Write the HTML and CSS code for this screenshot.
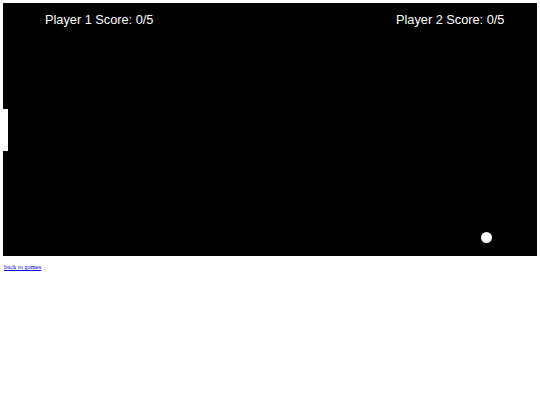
FILE: index.html
```html
<!DOCTYPE html>
<html>
<head>
<meta charset="utf-8">
<link rel="stylesheet" href="styles.css">
</head>
<body>
<div class="game">
  <div class="score score-left">Player 1 Score: 0/5</div>
  <div class="score score-right">Player 2 Score: 0/5</div>
  <div class="paddle paddle-left"></div>
  <div class="paddle paddle-right"></div>
  <div class="ball"></div>
</div>
<div class="links"><a href="#" class="back">back to games</a></div>
</body>
</html>
```
FILE: styles.css
```css
html {
  overflow: hidden;
}
body {
  margin: 3px;
  background: #fff;
  font-family: "Liberation Serif", serif;
}
.game {
  position: relative;
  width: 540px;
  height: 253px;
  background: #000;
  overflow: hidden;
}
.score {
  position: absolute;
  top: 9px;
  color: #fff;
  font-family: "Liberation Sans", Arial, sans-serif;
  font-size: 12.75px;
  line-height: 15px;
  white-space: nowrap;
}
.score-left {
  left: 42px;
}
.score-right {
  left: 393px;
}
.paddle {
  position: absolute;
  background: #fff;
  width: 4.5px;
}
.paddle-left {
  left: 0;
  top: 106px;
  height: 42px;
}
.paddle-right {
  left: 535.5px;
  top: 216px;
  height: 42px;
}
.ball {
  position: absolute;
  left: 478px;
  top: 229px;
  width: 11px;
  height: 11px;
  border-radius: 50%;
  background: #fff;
}
.links {
  margin-top: 7px;
  padding-left: 1px;
  font-size: 6.5px;
  line-height: 8px;
}
.back {
  color: #0000ee;
}
```
